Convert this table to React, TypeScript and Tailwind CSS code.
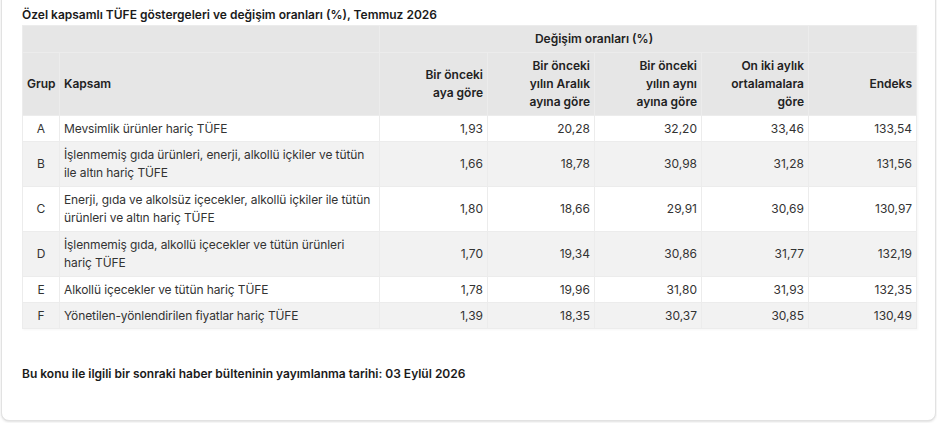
const ROWS = [
  { g: 'A', k: ['Mevsimlik ürünler hariç TÜFE'], v: ['1,93', '20,28', '32,20', '33,46', '133,54'] },
  { g: 'B', k: ['İşlenmemiş gıda ürünleri, enerji, alkollü içkiler ve tütün', 'ile altın hariç TÜFE'], v: ['1,66', '18,78', '30,98', '31,28', '131,56'] },
  { g: 'C', k: ['Enerji, gıda ve alkolsüz içecekler, alkollü içkiler ile tütün', 'ürünleri ve altın hariç TÜFE'], v: ['1,80', '18,66', '29,91', '30,69', '130,97'] },
  { g: 'D', k: ['İşlenmemiş gıda, alkollü içecekler ve tütün ürünleri', 'hariç TÜFE'], v: ['1,70', '19,34', '30,86', '31,77', '132,19'] },
  { g: 'E', k: ['Alkollü içecekler ve tütün hariç TÜFE'], v: ['1,78', '19,96', '31,80', '31,93', '132,35'] },
  { g: 'F', k: ['Yönetilen-yönlendirilen fiyatlar hariç TÜFE'], v: ['1,39', '18,35', '30,37', '30,85', '130,49'] },
];

const th = 'border border-[#ececec] px-1 py-1 font-semibold align-middle';
const td = 'border border-[#ececec] px-1 align-middle';

export default function App() {
  return (
    <div className="h-[423px] w-[937px] overflow-hidden bg-white font-['Inter',sans-serif] text-[#222]">
      <div className="-mt-4 ml-px mr-px h-[437px] rounded-lg border border-[#e2e2e2] bg-white px-[20px] pt-[22px] shadow-sm">
        <h2 className="mb-[2px] text-[12px] font-semibold leading-[16px] text-[#1a1a1a]">
          Özel kapsamlı TÜFE göstergeleri ve değişim oranları (%), Temmuz 2026
        </h2>

        <table className="w-[894px] table-fixed border-collapse text-[12px] leading-[18px] shadow-[1px_1px_2px_rgba(0,0,0,0.04)]">
          <colgroup>
            <col className="w-[37px]" />
            <col className="w-[320px]" />
            <col className="w-[108px]" />
            <col className="w-[107px]" />
            <col className="w-[107px]" />
            <col className="w-[107px]" />
            <col className="w-[108px]" />
          </colgroup>
          <thead className="bg-[#e6e6e6] text-[#222]">
            <tr className="h-[27px]">
              <th colSpan={2} className={th}></th>
              <th colSpan={4} className={`${th} text-center`}>Değişim oranları (%)</th>
              <th className={th}></th>
            </tr>
            <tr className="h-[62px]">
              <th className={`${th} text-center`}>Grup</th>
              <th className={`${th} text-left`}>Kapsam</th>
              <th className={`${th} text-right`}>Bir önceki<br />aya göre</th>
              <th className={`${th} text-right`}>Bir önceki<br />yılın Aralık<br />ayına göre</th>
              <th className={`${th} text-right`}>Bir önceki<br />yılın aynı<br />ayına göre</th>
              <th className={`${th} text-right`}>On iki aylık<br />ortalamalara<br />göre</th>
              <th className={`${th} text-right`}>Endeks</th>
            </tr>
          </thead>
          <tbody className="text-[#333]">
            {ROWS.map((r, i) => {
              const pad = r.k.length > 1 ? 'py-1' : 'py-[3.5px]';
              return (
                <tr key={r.g} className={i % 2 === 1 ? 'bg-[#f2f2f2]' : 'bg-white'}>
                  <td className={`${td} ${pad} text-center`}>{r.g}</td>
                  <td className={`${td} ${pad} pr-0 text-left tracking-[-0.1px]`}>
                    {r.k.map((line) => (
                      <div key={line} className="whitespace-nowrap">{line}</div>
                    ))}
                  </td>
                  {r.v.map((n, j) => (
                    <td key={j} className={`${td} ${pad} text-right`}>{n}</td>
                  ))}
                </tr>
              );
            })}
          </tbody>
        </table>

        <p className="mt-[36px] text-[12px] font-semibold leading-[18px] text-[#1a1a1a]">
          Bu konu ile ilgili bir sonraki haber bülteninin yayımlanma tarihi: 03 Eylül 2026
        </p>
      </div>
    </div>
  );
}
